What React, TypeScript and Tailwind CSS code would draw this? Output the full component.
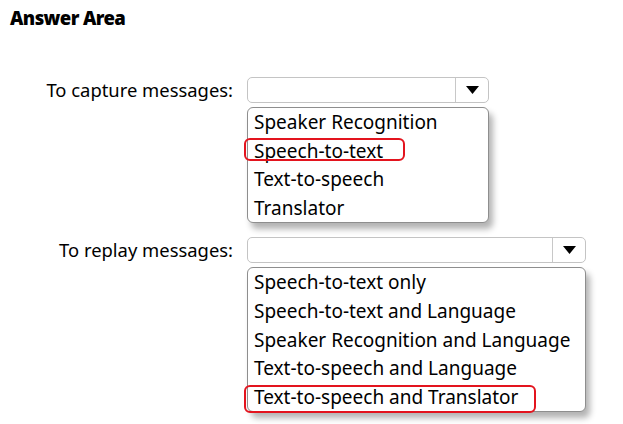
import React from "react";

const font = { fontFamily: '"Noto Sans", "Open Sans", sans-serif' };

function Select({ width }: { width: string }) {
  return (
    <div className={`flex h-[26px] ${width} rounded-[5px] border border-[#c4c4c4] bg-white`}>
      <div className="flex-1" />
      <div className="flex w-[33px] items-center justify-center border-l border-[#c8c8c8]">
        <svg width="13" height="8" viewBox="0 0 13 8">
          <path d="M0 0 H13 L6.5 8 Z" fill="#000" />
        </svg>
      </div>
    </div>
  );
}

function Item({ text, mark }: { text: string; mark?: string }) {
  return (
    <div className="relative h-[28.6px] pl-[6px] leading-[28.6px] whitespace-nowrap">
      {mark && (
        <div
          className={`pointer-events-none absolute left-[-4px] ${mark} rounded-[6px] border-2 border-[#e3141e]`}
        />
      )}
      {text}
    </div>
  );
}

function List({ width, children }: { width: string; children: React.ReactNode }) {
  return (
    <div
      className={`mt-[4px] ${width} rounded-[6px] border border-[#8e8e8e] bg-white shadow-[4px_6px_6px_rgba(0,0,0,0.3)]`}
    >
      {children}
    </div>
  );
}

export default function App() {
  return (
    <div className="h-[424px] w-[623px] bg-white text-black" style={font}>
      <div className="pl-[10px] pt-[6px] text-[18.5px] font-black leading-[24px] tracking-[-0.6px]">
        Answer Area
      </div>

      <div className="mt-[47px] flex">
        <div className="w-[247px] pr-[14px] text-right text-[18.4px] leading-[25px]">To capture messages:</div>
        <div className="flex flex-col text-[19px]">
          <Select width="w-[242px]" />
          <List width="w-[242px]">
            <Item text="Speaker Recognition" />
            <Item text="Speech-to-text" mark="top-[1px] w-[161px] h-[23px]" />
            <Item text="Text-to-speech" />
            <Item text="Translator" />
          </List>
        </div>
      </div>

      <div className="mt-[14px] flex">
        <div className="w-[247px] pr-[14px] text-right text-[18.4px] leading-[25px]">To replay messages:</div>
        <div className="flex flex-col text-[19px]">
          <Select width="w-[339px]" />
          <List width="w-[339px]">
            <Item text="Speech-to-text only" />
            <Item text="Speech-to-text and Language" />
            <Item text="Speaker Recognition and Language" />
            <Item text="Text-to-speech and Language" />
            <Item text="Text-to-speech and Translator" mark="top-[2px] w-[292px] h-[28px]" />
          </List>
        </div>
      </div>
    </div>
  );
}
